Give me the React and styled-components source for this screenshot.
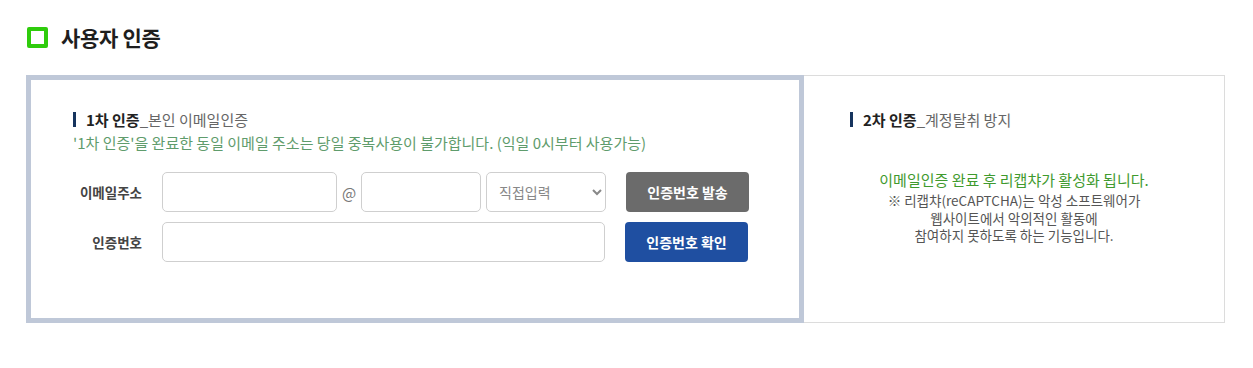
import React from 'react'
import styled, { createGlobalStyle } from 'styled-components';

const GlobalStyle = createGlobalStyle`
* { box-sizing: border-box; }
body {
    margin: 0;
    background: #fff;
    font-family: "Noto Sans CJK KR", "Noto Sans", sans-serif;
    color: #333;
}
`;

const Page = styled.div`
padding: 22px 0 0 26px;
width: 1225px;
`;

const Heading = styled.h2`
display: flex;
align-items: center;
gap: 13px;
margin: 0;
height: 30px;
font-size: 21px;
font-weight: 700;
color: #1e1e1e;
letter-spacing: -0.3px;
`;

const HeadIcon = styled.span`
width: 21px;
height: 21px;
border: 4px solid #2fcc0c;
border-radius: 2px;
margin-left: 1px;
`;

const Box = styled.div`
display: flex;
margin-top: 23px;
height: 248px;
`;

const Panel = styled.section`
width: ${({ $wide }) => $wide ? '778px' : 'auto'};
flex: ${({ $wide }) => $wide ? 'none' : '1'};
border: ${({ $wide }) => $wide ? '5px solid #bfc8d8' : '1px solid #dcdcdc'};
border-left: ${({ $wide }) => $wide ? '5px solid #bfc8d8' : 'none'};
padding: ${({ $wide }) => $wide ? '27px 0 0 42px' : '31px 0 0 46px'};
`;

const Title = styled.div`
display: flex;
align-items: center;
height: 24px;
font-size: 15px;
&::before {
    content: '';
    width: 3px;
    height: 15px;
    background: #16345e;
    margin-right: 10px;
}
b { font-weight: 700; color: #222; }
span { color: #666; font-weight: 400; }
`;

const Note = styled.p`
margin: 0;
font-size: 15px;
line-height: 24px;
color: #5f9c6c;
`;

const Form = styled.div`
display: flex;
flex-direction: column;
gap: 10px;
margin-top: 17px;
`;

const Row = styled.div`
display: flex;
align-items: center;
`;

const Label = styled.label`
width: 69px;
text-align: right;
margin-right: 20px;
font-size: 13.5px;
font-weight: 700;
color: #444;
`;

const Field = styled.input`
width: ${({ $w }) => $w}px;
height: 40px;
border: 1px solid #cfcfcf;
border-radius: 5px;
padding: 0 10px;
font-family: inherit;
font-size: 13px;
outline: none;
`;

const At = styled.span`
width: 24px;
text-align: center;
font-size: 15px;
color: #777;
`;

const Select = styled.select`
width: 120px;
height: 40px;
margin-left: 5px;
border: 1px solid #cfcfcf;
border-radius: 5px;
padding: 0 8px;
font-family: inherit;
font-size: 14px;
color: #888;
background: #fff;
outline: none;
`;

const Button = styled.button`
width: 123px;
height: 40px;
margin-left: 20px;
border: none;
border-radius: 4px;
background: ${({ $blue }) => $blue ? '#1f4fa1' : '#6b6b6b'};
color: #fff;
font-family: inherit;
font-size: 14px;
font-weight: 700;
cursor: pointer;
`;

const Info = styled.div`
margin: 37px 0 0 -46px;
text-align: center;
`;

const Active = styled.p`
margin: 0;
font-size: 15px;
line-height: 24px;
color: #3f9a2e;
`;

const Desc = styled.p`
margin: 0;
font-size: 13.5px;
line-height: 17.5px;
color: #555;
`;

const App = () => {
    return (
        <>
            <GlobalStyle />
            <Page>
                <Heading><HeadIcon />사용자 인증</Heading>
                <Box>
                    <Panel $wide>
                        <Title><b>1차 인증</b><span>_본인 이메일인증</span></Title>
                        <Note>'1차 인증'을 완료한 동일 이메일 주소는 당일 중복사용이 불가합니다. (익일 0시부터 사용가능)</Note>
                        <Form>
                            <Row>
                                <Label>이메일주소</Label>
                                <Field $w={175} />
                                <At>@</At>
                                <Field $w={120} />
                                <Select defaultValue="">
                                    <option value="">직접입력</option>
                                    <option>naver.com</option>
                                    <option>gmail.com</option>
                                </Select>
                                <Button>인증번호 발송</Button>
                            </Row>
                            <Row>
                                <Label>인증번호</Label>
                                <Field $w={443} />
                                <Button $blue>인증번호 확인</Button>
                            </Row>
                        </Form>
                    </Panel>
                    <Panel>
                        <Title><b>2차 인증</b><span>_계정탈취 방지</span></Title>
                        <Info>
                            <Active>이메일인증 완료 후 리캡챠가 활성화 됩니다.</Active>
                            <Desc>※ 리캡챠(reCAPTCHA)는 악성 소프트웨어가<br />웹사이트에서 악의적인 활동에<br />참여하지 못하도록 하는 기능입니다.</Desc>
                        </Info>
                    </Panel>
                </Box>
            </Page>
        </>
    )
};

export default App;
